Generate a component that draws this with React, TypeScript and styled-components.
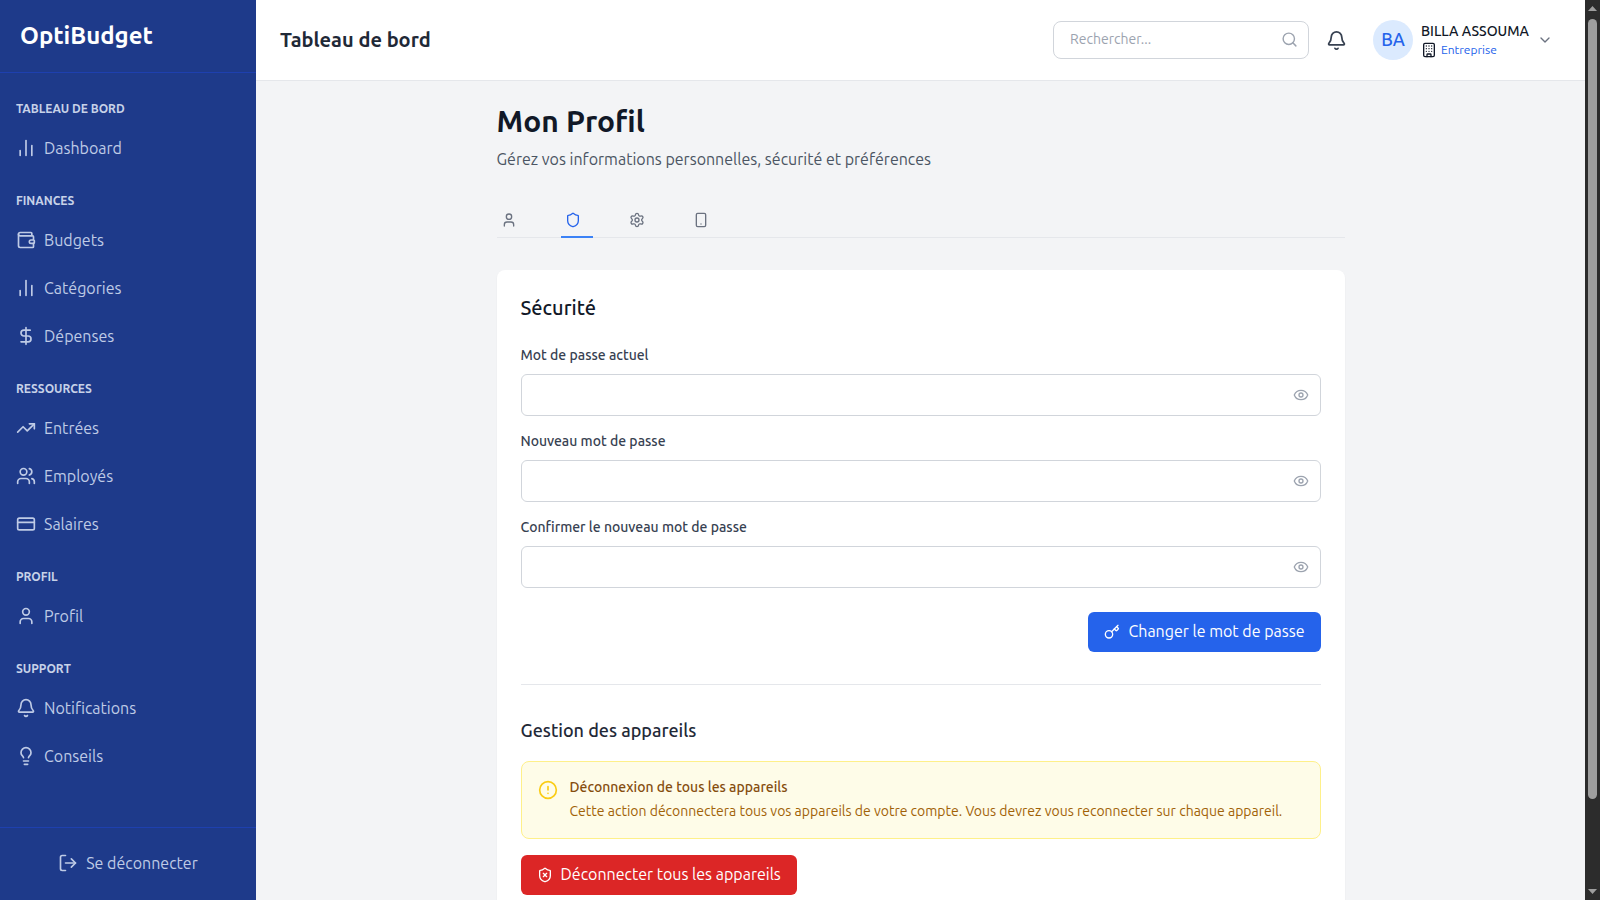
import React from "react";
import styled, { createGlobalStyle } from "styled-components";
import {
  ChartNoAxesColumn, Wallet, DollarSign, TrendingUp, Users, CreditCard, User, Bell, Lightbulb, LogOut,
  Search, Building, ChevronDown, Shield, Settings, Smartphone, Eye, Key, CircleAlert, ShieldX,
} from "lucide-react";

const Global = createGlobalStyle`
  html, body { height: 100%; overflow: hidden; }
  * { box-sizing: border-box; }
  body { margin: 0; background: #f3f4f6; color: #111827; font-family: Ubuntu, "Noto Sans", "Liberation Sans", sans-serif; }
`;

const Shell = styled.div`display: flex; height: 100vh;`;
const Sidebar = styled.aside`
  width: 256px; flex: none; background: #1e3a8a; color: #bfdbfe; display: flex; flex-direction: column;
`;
const Brand = styled.div`
  height: 73px; padding: 0 20px 1px; border-bottom: 1px solid #1e40af;
  display: flex; align-items: center;
  font-size: 24px; font-weight: 700; color: #fff;
`;
const Nav = styled.nav`flex: 1; padding: 28px 16px 0; display: flex; flex-direction: column; gap: 21px;`;
const Section = styled.div`display: flex; flex-direction: column;`;
const SectionLabel = styled.div`
  font-size: 12px; line-height: 16px; font-weight: 600; text-transform: uppercase; color: #c7d2e8; margin-bottom: 7px;
`;
const NavItem = styled.a`
  height: 48px; display: flex; align-items: center; gap: 8px; font-size: 16px; color: #bfcbe6;
  svg { flex: none; }
`;
const SideFoot = styled.div`
  height: 73px; padding-bottom: 2px; border-top: 1px solid #1e40af; display: flex; align-items: center; justify-content: center;
  gap: 8px; font-size: 16px; color: #bfcbe6;
`;
const Column = styled.div`flex: 1; min-width: 0; height: 100vh; overflow-y: auto; scrollbar-width: none;`;
const Header = styled.header`
  position: sticky; top: 0; z-index: 2; height: 81px; background: #fff; border-bottom: 1px solid #e5e7eb;
  display: flex; align-items: center; padding: 0 32px 0 24px;
`;
const PageName = styled.h1`margin: 0 0 2px; flex: 1; font-size: 20px; font-weight: 600; color: #1f2937;`;
const SearchBox = styled.div`
  width: 256px; height: 38px; border: 1px solid #d1d5db; border-radius: 8px; background: #fff;
  display: flex; align-items: center; padding: 0 10px 0 16px; font-size: 14px; color: #9ca3af;
  span { flex: 1; padding-bottom: 2px; }
  svg { margin-bottom: 2px; }
`;
const BellBtn = styled.div`margin: 0 26px 0 17px; display: flex; color: #374151;`;
const Avatar = styled.div`
  width: 40px; height: 40px; padding-bottom: 2px; border-radius: 50%; background: #dbeafe; color: #2563eb;
  display: flex; align-items: center; justify-content: center; font-size: 18px; font-weight: 500;
`;
const UserBox = styled.div`margin: 0 0 1px 8px; width: 116px; display: flex; flex-direction: column;`;
const UserName = styled.div`font-size: 14px; line-height: 20px; font-weight: 500; color: #111827; white-space: nowrap;`;
const UserKind = styled.div`
  margin-top: 1px; display: flex; align-items: center; gap: 4px; font-size: 12px; line-height: 16px; color: #2563eb;
  svg { color: #111827; }
`;
const Main = styled.main`max-width: 896px; margin: 0 auto; padding: 22px 24px 77px;`;
const Title = styled.h2`margin: 0; font-size: 30px; line-height: 36px; font-weight: 700; color: #111827;`;
const Sub = styled.p`margin: 8px 0 0; font-size: 16px; line-height: 24px; color: #4b5563;`;
const Tabs = styled.div`display: flex; gap: 32px; margin-top: 33px; border-bottom: 1px solid #e5e7eb; height: 34px;`;
const Tab = styled.div<{ $on?: boolean }>`
  width: 32px; height: 34px; padding: 8px 12px 0 4px; color: ${(p) => (p.$on ? "#2563eb" : "#6b7280")};
  border-bottom: 2px solid ${(p) => (p.$on ? "#3b82f6" : "transparent")};
`;
const Card = styled.section`
  margin-top: 32px; background: #fff; border-radius: 8px; padding: 24px; box-shadow: 0 1px 2px rgba(0,0,0,.05);
`;
const CardTitle = styled.h3`margin: 0 0 23px; font-size: 20px; line-height: 28px; font-weight: 500; color: #111827;`;
const Field = styled.div`margin-bottom: 15px;`;
const Label = styled.label`display: block; font-size: 14px; line-height: 20px; font-weight: 500; color: #374151; margin-bottom: 9px;`;
const Input = styled.div`
  height: 42px; border: 1px solid #d1d5db; border-radius: 6px; background: #fff; color: #9ca3af;
  display: flex; align-items: center; justify-content: flex-end; padding-right: 11px;
`;
const Actions = styled.div`display: flex; justify-content: flex-end; margin-top: 24px;`;
const Button = styled.button<{ $red?: boolean }>`
  height: 40px; border: 0; border-radius: 6px; padding: 0 16px 2px; color: #fff;
  background: ${(p) => (p.$red ? "#dc2626" : "#2563eb")}; display: inline-flex; align-items: center; gap: 8px;
  font: inherit; font-size: 16px;
  svg { margin-top: 2px; }
`;
const Divider = styled.hr`border: 0; border-top: 1px solid #e5e7eb; margin: 32px 0 0;`;
const Subhead = styled.h4`margin: 31px 0 17px; font-size: 18px; line-height: 28px; font-weight: 500; color: #1f2937;`;
const Alert = styled.div`
  height: 78px; background: #fefce8; border: 1px solid #fef08a; border-radius: 8px; padding: 15px 16px;
  display: flex; gap: 12px; margin-bottom: 16px;
  svg { color: #facc15; margin-top: 3px; flex: none; }
`;
const AlertTitle = styled.div`font-size: 14px; line-height: 20px; font-weight: 500; color: #854d0e;`;
const AlertText = styled.div`margin-top: 4px; font-size: 14px; line-height: 20px; color: #a16207;`;
const Rail = styled.div`width: 15px; flex: none; background: #2c2c2c; display: flex; flex-direction: column;`;
const RailEnd = styled.div`height: 17px; flex: none; display: flex; align-items: center; justify-content: center;`;
const RailTrack = styled.div`flex: 1; padding: 2px 3px 0;`;
const RailThumb = styled.div`height: 780px; border-radius: 5px; background: #9e9e9e;`;

const groups = [
  { label: "Tableau de bord", items: [["Dashboard", ChartNoAxesColumn]] },
  { label: "Finances", items: [["Budgets", Wallet], ["Catégories", ChartNoAxesColumn], ["Dépenses", DollarSign]] },
  { label: "Ressources", items: [["Entrées", TrendingUp], ["Employés", Users], ["Salaires", CreditCard]] },
  { label: "Profil", items: [["Profil", User]] },
  { label: "Support", items: [["Notifications", Bell], ["Conseils", Lightbulb]] },
] as const;

const fields = ["Mot de passe actuel", "Nouveau mot de passe", "Confirmer le nouveau mot de passe"];

export default function App() {
  return (
    <>
      <Global />
      <Shell>
        <Sidebar>
          <Brand>OptiBudget</Brand>
          <Nav>
            {groups.map((g) => (
              <Section key={g.label}>
                <SectionLabel>{g.label}</SectionLabel>
                {g.items.map(([name, Icon]) => (
                  <NavItem key={name}><Icon size={20} strokeWidth={2} />{name}</NavItem>
                ))}
              </Section>
            ))}
          </Nav>
          <SideFoot><LogOut size={20} />Se déconnecter</SideFoot>
        </Sidebar>
        <Column>
          <Header>
            <PageName>Tableau de bord</PageName>
            <SearchBox><span>Rechercher...</span><Search size={17} /></SearchBox>
            <BellBtn><Bell size={21} /></BellBtn>
            <Avatar>BA</Avatar>
            <UserBox>
              <UserName>BILLA ASSOUMA</UserName>
              <UserKind><Building size={16} />Entreprise</UserKind>
            </UserBox>
            <ChevronDown size={16} color="#6b7280" />
          </Header>
          <Main>
            <Title>Mon Profil</Title>
            <Sub>Gérez vos informations personnelles, sécurité et préférences</Sub>
            <Tabs>
              <Tab><User size={16} /></Tab>
              <Tab $on><Shield size={16} /></Tab>
              <Tab><Settings size={16} /></Tab>
              <Tab><Smartphone size={16} /></Tab>
            </Tabs>
            <Card>
              <CardTitle>Sécurité</CardTitle>
              {fields.map((f) => (
                <Field key={f}>
                  <Label>{f}</Label>
                  <Input><Eye size={16} /></Input>
                </Field>
              ))}
              <Actions><Button><Key size={16} />Changer le mot de passe</Button></Actions>
              <Divider />
              <Subhead>Gestion des appareils</Subhead>
              <Alert>
                <CircleAlert size={20} />
                <div>
                  <AlertTitle>Déconnexion de tous les appareils</AlertTitle>
                  <AlertText>Cette action déconnectera tous vos appareils de votre compte. Vous devrez vous reconnecter sur chaque appareil.</AlertText>
                </div>
              </Alert>
              <Button $red><ShieldX size={16} />Déconnecter tous les appareils</Button>
            </Card>
          </Main>
        </Column>
        <Rail>
          <RailEnd><svg width="9" height="5" viewBox="0 0 9 5"><polygon points="0,5 9,5 4.5,0" fill="#9e9e9e" /></svg></RailEnd>
          <RailTrack><RailThumb /></RailTrack>
          <RailEnd><svg width="9" height="5" viewBox="0 0 9 5"><polygon points="0,0 9,0 4.5,5" fill="#9e9e9e" /></svg></RailEnd>
        </Rail>
      </Shell>
    </>
  );
}
